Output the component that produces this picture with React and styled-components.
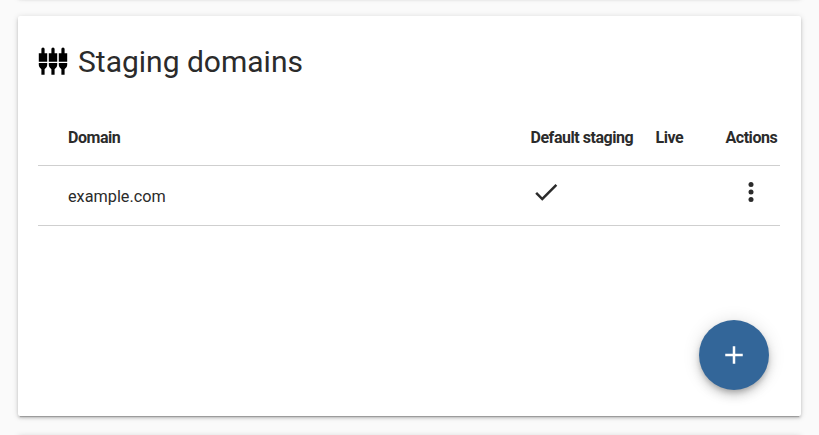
import React from "react";
import styled, { createGlobalStyle } from "styled-components";

const GlobalStyle = createGlobalStyle`
  * { box-sizing: border-box; }
  html, body { margin: 0; height: 100%; overflow: hidden; }
  body {
    background: #fafafa;
    color: #2b2b2b;
    font-family: Roboto, "Liberation Sans", sans-serif;
  }
`;

const Page = styled.main`
  display: flex;
  flex-direction: column;
  gap: 19px;
  width: 819px;
  height: 435px;
  overflow: hidden;
  padding: 0 18.5px 0 18px;
`;

const Card = styled.section`
  display: flex;
  flex-direction: column;
  flex: none;
  height: 400px;
  padding: 28px 20px 26px;
  background: #fff;
  border-radius: 2px;
  box-shadow: 0 3px 1px -2px rgba(0, 0, 0, 0.2), 0 2px 3px 0 rgba(0, 0, 0, 0.17),
    0 1px 6px 0 rgba(0, 0, 0, 0.14);
`;

const CardEdge = styled(Card)`
  height: 20px;
  padding: 0;
  margin-top: ${(p) => (p.$above ? "-23px" : "0")};
`;

const Header = styled.header`
  display: flex;
  align-items: center;
  height: 36px;
  gap: 10px;
`;

const Title = styled.h1`
  margin: 0;
  font-size: 30px;
  font-weight: 400;
  line-height: 36px;
  white-space: nowrap;
`;

const Row = styled.div`
  display: grid;
  grid-template-columns: 492.5px 125px 70px 55px;
  align-items: center;
  width: 742px;
  height: 60px;
  border-bottom: 1px solid #cfcfcf;
`;

const HeadRow = styled(Row)`
  height: 58px;
  margin-top: 28px;
`;

const Cell = styled.div`
  padding-top: 3px;
  padding-left: ${(p) => p.$indent || 0}px;
  font-size: 16.25px;
  line-height: 20px;
  white-space: nowrap;
`;

const HeadCell = styled(Cell)`
  padding-top: 2px;
  font-size: 16px;
  font-weight: 700;
  letter-spacing: -0.46px;
`;

const IconCell = styled.div`
  display: flex;
  height: 30px;
  margin-bottom: 8px;
  padding-left: ${(p) => p.$indent || 0}px;
`;

const AddButton = styled.button`
  display: flex;
  align-items: center;
  justify-content: center;
  align-self: flex-end;
  width: 70px;
  height: 70px;
  margin: auto 11.5px 0 0;
  padding: 0;
  border: 0;
  border-radius: 50%;
  background: #336699;
  color: #fff;
  box-shadow: 0 3px 5px -1px rgba(0, 0, 0, 0.2), 0 6px 10px 0 rgba(0, 0, 0, 0.14),
    0 1px 18px 0 rgba(0, 0, 0, 0.12);
`;

const PlugsIcon = () => (
  <svg width="30" height="30" viewBox="0 0 30 30" fill="#000">
    {[1, 11, 21].map((x) => (
      <path
        key={x}
        transform={`translate(${x} 0)`}
        d="M2.400 6.200V2a1.600 1.600 0 0 1 3.200 0v4.200h2.600v8.500h-8.400V6.200zM-.2 16h8.400v2.200q0 2.300-2.600 4v5.500H2.400v-5.500q-2.600-1.700-2.600-4z"
      />
    ))}
  </svg>
);

const CheckIcon = () => (
  <svg width="30" height="30" viewBox="0 0 24 24" fill="currentColor">
    <path d="M9 16.170 4.830 12l-1.420 1.410L9 19 21 7l-1.410-1.410z" />
  </svg>
);

const MoreIcon = () => (
  <svg width="30" height="30" viewBox="0 0 24 24" fill="currentColor">
    <circle cx="12" cy="6" r="2" />
    <circle cx="12" cy="12" r="2" />
    <circle cx="12" cy="18" r="2" />
  </svg>
);

const PlusIcon = () => (
  <svg width="30" height="30" viewBox="0 0 24 24" fill="currentColor">
    <path d="M19 13h-6v6h-2v-6H5v-2h6V5h2v6h6z" />
  </svg>
);

export default function App() {
  return (
    <>
      <GlobalStyle />
      <Page>
        <CardEdge $above />
        <Card>
          <Header>
            <PlugsIcon />
            <Title>Staging domains</Title>
          </Header>
          <HeadRow>
            <HeadCell $indent={30}>Domain</HeadCell>
            <HeadCell>Default staging</HeadCell>
            <HeadCell>Live</HeadCell>
            <HeadCell>Actions</HeadCell>
          </HeadRow>
          <Row>
            <Cell $indent={30}>example.com</Cell>
            <IconCell><CheckIcon /></IconCell>
            <Cell />
            <IconCell $indent={10}><MoreIcon /></IconCell>
          </Row>
          <AddButton aria-label="Add domain"><PlusIcon /></AddButton>
        </Card>
        <CardEdge />
      </Page>
    </>
  );
}
